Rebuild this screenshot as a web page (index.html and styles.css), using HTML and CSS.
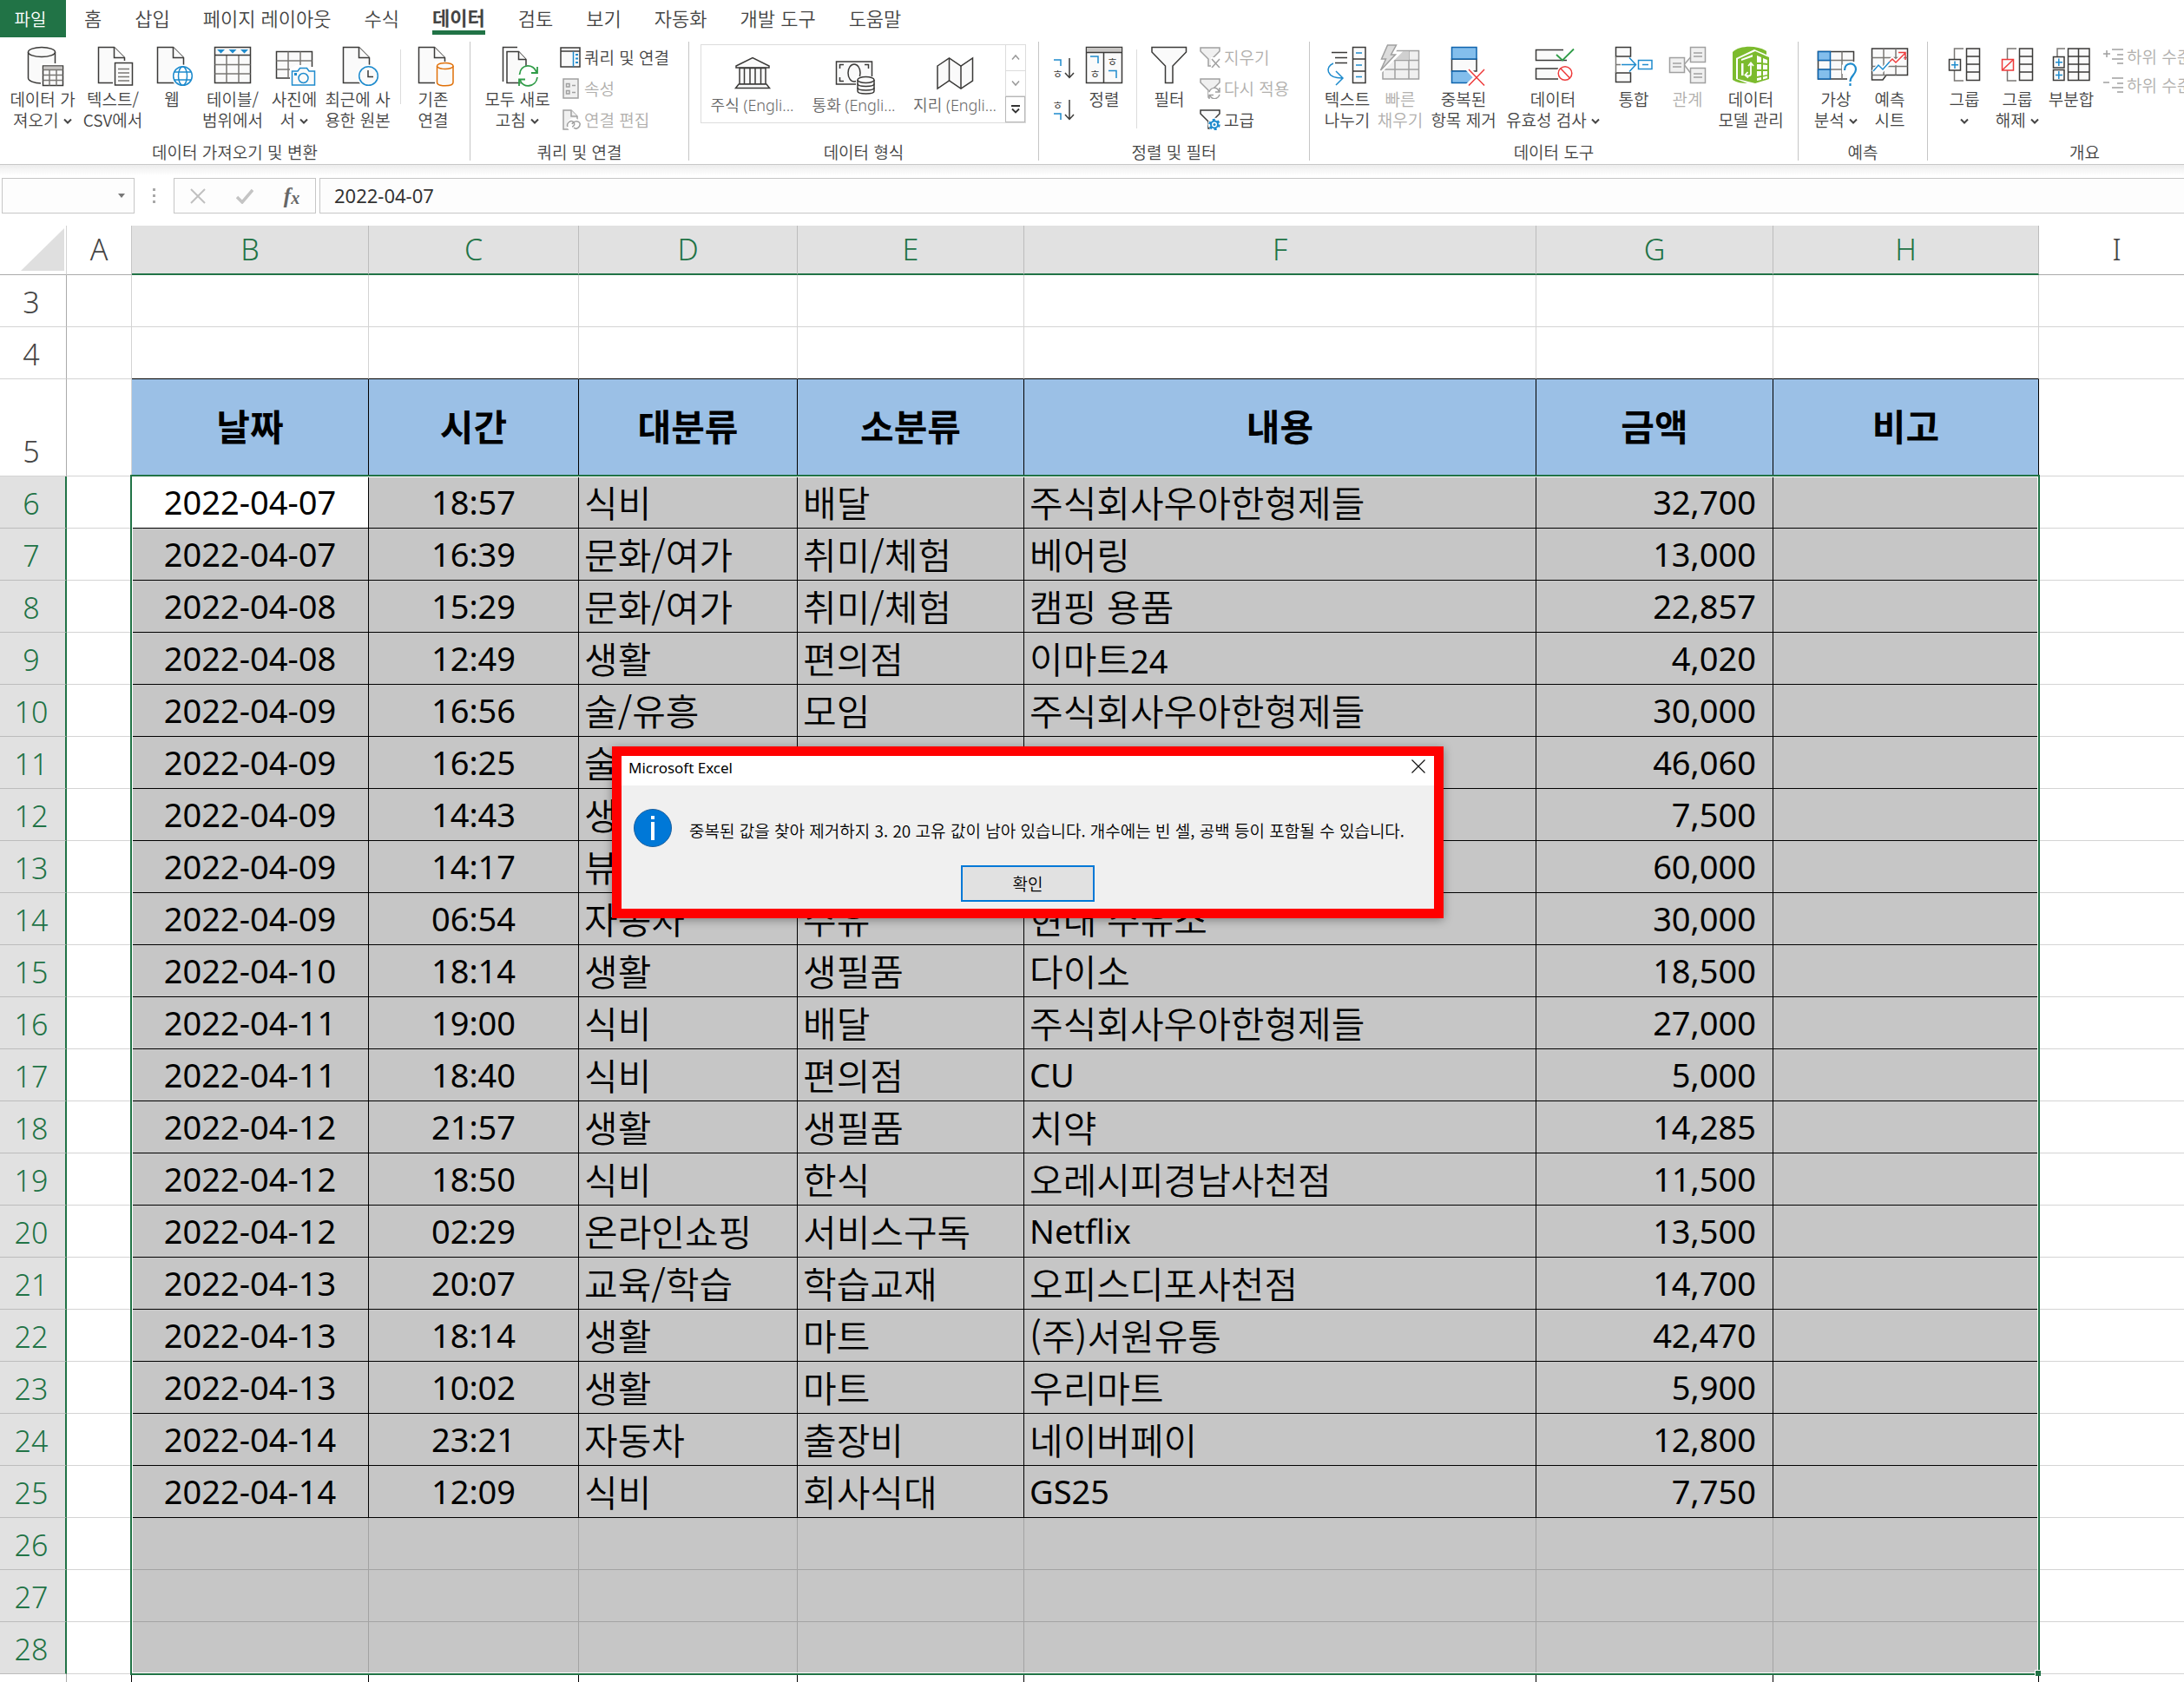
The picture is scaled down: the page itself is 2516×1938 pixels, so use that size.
FILE: index.html
```html
<!DOCTYPE html>
<html lang="ko">
<head>
<meta charset="utf-8">
<title>Microsoft Excel</title>
<link rel="stylesheet" href="styles.css">
</head>
<body>
<svg class="sprite" aria-hidden="true">
  <symbol id="doc" viewBox="0 0 48 48"><path class="k" d="M7.500 3.500H25.500L37.500 15.500V44.500H7.500Z"/><path class="k" d="M25.500 3.500V15.500H37.500"/></symbol>
  <symbol id="chev" viewBox="0 0 10 8"><path d="M1 1.500L5 5.500L9 1.500" fill="none" stroke="#444" stroke-width="2"/></symbol>
  <symbol id="funnel" viewBox="0 0 24 24"><path d="M1 1H23V5L14 14V22H10V14L1 5Z" stroke-width="1.500"/></symbol>
</svg>

<nav class="tabs" aria-label="리본 탭">
  <button class="tab-file">파일</button>
  <button class="tab">홈</button>
  <button class="tab">삽입</button>
  <button class="tab">페이지 레이아웃</button>
  <button class="tab">수식</button>
  <button class="tab tab-active">데이터</button>
  <button class="tab">검토</button>
  <button class="tab">보기</button>
  <button class="tab">자동화</button>
  <button class="tab">개발 도구</button>
  <button class="tab">도움말</button>
</nav>

<section class="ribbon" aria-label="데이터">
  <div class="group group-get">
    <div class="tools">
      <button class="tool"><svg class="icon" viewBox="0 0 48 48"><path class="k" d="M7.500 9V39C7.500 42 14 45 22.500 45H24V24H38.500V9"/><ellipse class="k" cx="23" cy="9" rx="15.500" ry="5.500"/><path fill="#fff" d="M22 22H48V48H22Z"/><path class="k" d="M24.500 25H47.500V47.500H24.500Z"/><path fill="#c8c6c4" d="M25 25.500H47V29H25Z"/><path class="g" d="M24.500 29.500H47.500M24.500 35.500H47.500M24.500 41.500H47.500M32 29.500V47.500M40 29.500V47.500"/></svg><span>데이터 가<br>져오기 <svg class="chev"><use href="#chev"/></svg></span></button>
      <button class="tool"><svg class="icon" viewBox="0 0 48 48"><use href="#doc"/><path fill="#fff" d="M24 19H48V48H24Z"/><path class="k" d="M26.500 21.500H46.500V47H26.500Z"/><path class="g" d="M30 28.500H43M30 33H43M30 37.500H43M30 42H43"/></svg><span>텍스트/<br>CSV에서</span></button>
      <button class="tool"><svg class="icon" viewBox="0 0 48 48"><use href="#doc"/><circle cx="36.500" cy="36.500" r="13" fill="#fff"/><circle class="b" cx="36.500" cy="36.500" r="10.800"/><ellipse class="b" cx="36.500" cy="36.500" rx="5" ry="10.800"/><path class="b" d="M27 32H46M27 41H46"/></svg><span>웹</span></button>
      <button class="tool"><svg class="icon" viewBox="0 0 48 48"><path class="k" d="M3.500 3.500H44.500V44.500H3.500Z"/><path class="g" d="M3.500 23.500H44.500M3.500 34H44.500M17 12.500V44.500M31 12.500V44.500"/><path class="k" d="M3.500 12.500H44.500"/><path fill="#1e8bcd" d="M6 6H15L10.500 10.500ZM19.500 6H28.500L24 10.500ZM33 6H42L37.500 10.500Z"/></svg><span>테이블/<br>범위에서</span></button>
      <button class="tool"><svg class="icon" viewBox="0 0 48 48"><path class="k" d="M3.500 8.500H44.500V39H3.500Z"/><path class="g" d="M3.500 19H44.500M3.500 29H44.500M17 8.500V39M31 8.500V39"/><path fill="#fff" d="M19 28L26 24H40L42 26H48V48H19Z"/><path class="b f" d="M21.500 31H28L30.500 27.500H38.500L41 31H47.500V47H21.500Z"/><circle class="b" cx="34.500" cy="39" r="5.500"/><path fill="#1e8bcd" d="M24 33H27V36H24Z"/></svg><span>사진에<br>서 <svg class="chev"><use href="#chev"/></svg></span></button>
      <button class="tool"><svg class="icon" viewBox="0 0 48 48"><use href="#doc"/><circle cx="36.500" cy="36.500" r="13" fill="#fff"/><circle class="b f" cx="36.500" cy="36.500" r="10.800"/><path class="k n" d="M36 30V37.500H42"/></svg><span>최근에 사<br>용한 원본</span></button>
      <i class="rule rule-short"></i>
      <button class="tool"><svg class="icon" viewBox="0 0 48 48"><use href="#doc"/><path fill="#fff" d="M26 20H48V48H26Z"/><path class="o" d="M28.500 25V44C28.500 49 47 49 47 44V25"/><ellipse class="o" cx="37.800" cy="25" rx="9.300" ry="3.500"/></svg><span>기존<br>연결</span></button>
    </div>
    <h2>데이터 가져오기 및 변환</h2>
  </div>

  <div class="group group-query">
    <div class="tools">
      <button class="tool"><svg class="icon" viewBox="0 0 48 48"><path class="k n" d="M7.500 43V3.500H24"/><path class="k" d="M12 8.500H25.500L34 17.500V44.500H12Z"/><path class="k" d="M25.500 8.500V17.500H34"/><circle cx="36.500" cy="36.500" r="12" fill="#fff"/><path class="e" d="M26.500 35C27.500 22 43 22 46 32M47 26V33H40M47 38C45.500 50 30 51 27 41M26 48V40.500H33"/></svg><span>모두 새로<br>고침 <svg class="chev"><use href="#chev"/></svg></span></button>
      <div class="stack">
        <button class="mini"><svg class="mini-icon" viewBox="0 0 24 24"><path class="k" d="M1 1H23V23H1Z"/><path class="k" d="M1 5H23"/><path class="b" d="M15.500 5.500V22.500"/><path fill="#1e8bcd" d="M18 8H21V10H18ZM18 12.500H21V14.500H18ZM18 17H21V19H18Z"/></svg>쿼리 및 연결</button>
        <button class="mini" disabled><svg class="mini-icon" viewBox="0 0 24 24"><path class="d" d="M4 1H21V23H4Z"/><path class="d" d="M7.500 6.500H11V10H7.500ZM7.500 14.500H11V18H7.500ZM14 8.500H18M14 16.500H18"/></svg>속성</button>
        <button class="mini" disabled><svg class="mini-icon" viewBox="0 0 24 24"><path class="d" d="M4 1H13L20 8V23H4Z"/><path class="d" d="M13 1V8H20"/><circle cx="16" cy="18" r="8" fill="#fff"/><path class="d n" d="M9 20C7 16 13 11 16 15C18 18 15 20 14 20M14 17C15 14 21 12 23 16C24 20 19 24 16 21"/></svg>연결 편집</button>
      </div>
    </div>
    <h2>쿼리 및 연결</h2>
  </div>

  <div class="group group-types">
    <div class="tools">
      <div class="gallery">
        <button class="type"><svg class="icon" viewBox="0 0 48 48"><path class="k" d="M5 14L24 4.500L43 14V16H5Z"/><path class="k" d="M9 16.500H39V35H9Z"/><path class="k" d="M14.500 16.500V35M21 16.500V35M27 16.500V35M33.500 16.500V35"/><path class="k" d="M8 35H40L43.500 39.500H4.500Z"/></svg><span>주식 (Engli...</span></button>
        <button class="type"><svg class="icon" viewBox="0 0 48 48"><path class="k" d="M3.500 9H44.500V35H3.500Z"/><ellipse class="k" cx="24" cy="22" rx="7" ry="10"/><path class="k n" d="M12 12.500H7.500V17M7.500 27V31.500H12M36 12.500H40.500V17"/><path fill="#fff" d="M26 26H48V48H26Z"/><path class="k" d="M28 30V43C28 47 47 47 47 43V30"/><ellipse class="k" cx="37.500" cy="30" rx="9.500" ry="3.500"/><path class="k n" d="M28 34.500C28 38.500 47 38.500 47 34.500M28 39C28 43 47 43 47 39"/></svg><span>통화 (Engli...</span></button>
        <button class="type"><svg class="icon" viewBox="0 0 48 48"><path class="k" d="M4 14L17.500 5L31 14L44.500 5V31L31 40L17.500 31L4 40Z"/><path class="k" d="M17.500 5V31M31 14V40"/></svg><span>지리 (Engli...</span></button>
        <div class="scroller">
          <button aria-label="위로"><svg width="10" height="8" viewBox="0 0 10 8"><path d="M1 6.500L5 2L9 6.500" fill="none" stroke="#999" stroke-width="1.500"/></svg></button>
          <button aria-label="아래로"><svg width="10" height="8" viewBox="0 0 10 8"><path d="M1 1.500L5 6L9 1.500" fill="none" stroke="#999" stroke-width="1.500"/></svg></button>
          <button class="more" aria-label="자세히"><svg width="12" height="12" viewBox="0 0 12 12"><path d="M1 2H11M2 5.500L6 9.500L10 5.500" fill="none" stroke="#333" stroke-width="1.800"/></svg></button>
        </div>
      </div>
    </div>
    <h2>데이터 형식</h2>
  </div>

  <div class="group group-sort">
    <div class="tools">
      <div class="sorts">
        <button aria-label="오름차순 정렬"><svg width="26" height="28" viewBox="0 0 26 28"><path class="b" d="M2 5H10V12"/><text class="jamo" x="0" y="26">ㅎ</text><path class="k n" d="M20 3V25M15 20L20 25.500L25 20"/></svg></button>
        <button aria-label="내림차순 정렬"><svg width="26" height="28" viewBox="0 0 26 28"><text class="jamo" x="0" y="14">ㅎ</text><path class="b" d="M2 19H10V26"/><path class="k n" d="M20 3V25M15 20L20 25.500L25 20"/></svg></button>
      </div>
      <button class="tool"><svg class="icon" viewBox="0 0 48 48"><path class="k" d="M3.500 3.500H44.500V44.500H3.500Z"/><path fill="#c8c6c4" d="M4 4H44V9H4Z"/><path class="k" d="M3.500 9.500H44.500M23.500 9.500V44.500"/><path class="b" d="M8 14H17V22M29 30.500H38V39"/><text class="jamo" x="7" y="39">ㅎ</text><text class="jamo" x="27" y="25">ㅎ</text></svg><span>정렬</span></button>
      <i class="rule"></i>
      <button class="tool"><svg class="icon" viewBox="0 0 48 48"><path class="k" d="M4 3.500H43.500V9L28 25V44.500H19.500V25L4 9Z"/></svg><span>필터</span></button>
      <div class="stack">
        <button class="mini" disabled><svg class="mini-icon" viewBox="0 0 24 24"><use href="#funnel" fill="#f0f0f0" stroke="#a0a0a0"/><path d="M13 12H24V24H13Z" fill="#fff"/><path class="d n" d="M14 14L23 24M23 14L14 24"/></svg>지우기</button>
        <button class="mini" disabled><svg class="mini-icon" viewBox="0 0 24 24"><use href="#funnel" fill="#f0f0f0" stroke="#a0a0a0"/><circle cx="17" cy="18" r="7" fill="#fff"/><path class="d n" d="M11 16C13 10 20 10 22 15M23 11V16H18M23 19C21 25 14 25 12 20M11 24V19.500H16"/></svg>다시 적용</button>
        <button class="mini"><svg class="mini-icon" viewBox="0 0 24 24"><use href="#funnel" fill="#fafafa" stroke="#3b3a38"/><circle cx="17" cy="17" r="7.500" fill="#fff"/><circle cx="17" cy="17.500" r="4" fill="#fff" stroke="#1e8bcd" stroke-width="2"/><circle cx="17" cy="17.500" r="5.500" fill="none" stroke="#1e8bcd" stroke-width="2.500" stroke-dasharray="3 2.760"/><circle cx="17" cy="17.500" r="1.500" fill="#1e8bcd"/></svg>고급</button>
      </div>
    </div>
    <h2>정렬 및 필터</h2>
  </div>

  <div class="group group-data">
    <div class="tools">
      <button class="tool"><svg class="icon" viewBox="0 0 48 48"><path class="k" d="M6 9.500H24M10 15.500H24M10 21.500H24M30.500 3.500H45V44.500H30.500ZM30.500 17H45M30.500 31H45"/><path class="b" d="M34 10H41M34 24H41M34 37.500H41M8 22C-2 26 0 39 18 39M11 31L19 39L11 47"/></svg><span>텍스트<br>나누기</span></button>
      <button class="tool" disabled><svg class="icon" viewBox="0 0 48 48"><path class="d" d="M4 7.500H45.500V40H4Z"/><path class="d" d="M4 18.500H45.500M4 29H45.500M18 7.500V40M34 7.500V40"/><path fill="#d0d0d0" d="M18 8H34V18H18Z"/><path d="M9 0H21L15 11H21L1 31L7 16H1Z" fill="#e0e0e0" stroke="#fff" stroke-width="5"/><path d="M9.500 1H19.500L13.500 12H18.500L1.500 30L7.500 17H2.500Z" fill="#dcdcdc" stroke="#a0a0a0" stroke-width="1.500"/></svg><span>빠른<br>채우기</span></button>
      <button class="tool"><svg class="icon" viewBox="0 0 48 48"><path class="k" d="M10.500 17H39V31H10.500Z"/><path d="M10.500 3.500H39V17H10.500ZM10.500 31H33L37 36L30 44.500H10.500Z" fill="#83beec" stroke="#0f64ad" stroke-width="1.500"/><path d="M29 28L48 48M48 28L29 48" stroke="#fff" stroke-width="6"/><path class="r" d="M30 29L48 47.500M48 29L30 47.500"/></svg><span>중복된<br>항목 제거</span></button>
      <button class="tool"><svg class="icon" viewBox="0 0 48 48"><path class="k" d="M36 6.500H4.500V18.500H40M30 28H4.500V40H30"/><path class="e" d="M28 12L35 18.500L48 5.500"/><circle cx="38" cy="33.500" r="10" fill="#fff"/><circle class="r" cx="38" cy="33.500" r="7.800"/><path class="r" d="M33 28L43.500 39"/></svg><span>데이터<br>유효성 검사 <svg class="chev"><use href="#chev"/></svg></span></button>
      <button class="tool"><svg class="icon" viewBox="0 0 48 48"><path class="k" d="M3.500 3.500H20.500V14H3.500ZM3.500 33H20.500V43.500H3.500Z"/><path class="g" d="M3.500 14V33M3.500 23.500H9"/><path class="b" d="M10 23.500H26M19 15.500L26.500 23.500L19 31.500M29.500 18.500H45V28.500H29.500ZM34 23.500H41"/></svg><span>통합</span></button>
      <button class="tool" disabled><svg class="icon" viewBox="0 0 48 48"><path class="d" d="M3.500 15.500H20.500V32.500H3.500ZM27.500 3.500H44.500V20.500H27.500ZM27.500 27.500H44.500V44.500H27.500Z"/><path class="d n" d="M20.500 23L27.500 15M20.500 24L27.500 33M7 22H17M7 26H17M31 10H41M31 14H41M31 34H41M31 38H41"/></svg><span>관계</span></button>
      <button class="tool"><svg class="icon" viewBox="0 0 48 48"><path fill="#7cbb2e" d="M3 9C11 1 32 1 42 8V12L28 6L7 16V40L20 45C13 45 8 44 3 41Z"/><path fill="#7cbb2e" d="M29 8L45 15V40L29 45L9 40V17Z"/><path fill="#fff" d="M13 17L26 12V14.500L13 19ZM31 13L36 15V21H31ZM38 16L43 18V22L38 21.500ZM31 23H36V29H31ZM38 23.500L43 24V29H38ZM31 31H36V36L31 37ZM38 31H43V35L38 36ZM31 39L36 38V41L31 42ZM38 37.500L43 36.500V39L38 40.500ZM13 22H15.500V36H13Z"/><path fill="none" stroke="#fff" stroke-width="1.800" d="M24 22V34C24 37 20 37 18 35.500M21 25L24 21.500L27 25M20.500 32L17.500 35.500L21 38.500"/></svg><span>데이터<br>모델 관리</span></button>
    </div>
    <h2>데이터 도구</h2>
  </div>

  <div class="group group-forecast">
    <div class="tools">
      <button class="tool"><svg class="icon" viewBox="0 0 48 48"><path class="k" d="M3.500 8.500H44.500V40H3.500Z"/><path class="g" d="M3.500 18.500H44.500M3.500 29H44.500M31 8.500V40"/><path d="M3.500 8.500H17.500V18.500H3.500ZM3.500 29H17.500V40H3.500ZM17.500 18.500V29" fill="#83beec" stroke="#0f64ad" stroke-width="1.500"/><path fill="#fff" d="M31 24L36 20H48V48H37V34H31Z"/><path fill="none" stroke="#1e8bcd" stroke-width="2.200" d="M34 30C34 20 47 20 47 29C47 35 40.500 36 40.500 43M40.500 45V48"/></svg><span>가상<br>분석 <svg class="chev"><use href="#chev"/></svg></span></button>
      <button class="tool"><svg class="icon" viewBox="0 0 48 48"><path class="k" d="M3.500 5H44.500V35.500H20L16 41H3.500Z"/><path class="g" d="M3.500 15.500H44.500M3.500 25.500H44.500M17 5V35.500M31 5V35.500M3.500 35.500H20"/><path stroke="#fff" stroke-width="5" fill="none" d="M5 32L12 24L16 29L27 17L31 21L42 10"/><path class="b" d="M5 31L11 24L16 29L24 20"/><path class="r" d="M24 20L27 17L31 21L42 10M34 9.500H42V18"/></svg><span>예측<br>시트</span></button>
    </div>
    <h2>예측</h2>
  </div>

  <div class="group group-outline">
    <div class="tools">
      <button class="tool"><svg class="icon" viewBox="0 0 48 48"><path class="g" d="M23 5H12.500V42H23"/><path class="k" d="M26.500 5H41.500V41.500H26.500ZM26.500 14H41.500M26.500 23H41.500M26.500 32H41.500M6.500 17.500H19.500V30H6.500Z"/><path class="b" d="M13 19.500V28M9 23.800H17"/></svg><span>그룹<br><svg class="chev"><use href="#chev"/></svg></span></button>
      <button class="tool"><svg class="icon" viewBox="0 0 48 48"><path class="g" d="M23 5H12.500V42H23"/><path class="k" d="M26.500 5H41.500V41.500H26.500ZM26.500 14H41.500M26.500 23H41.500M26.500 32H41.500"/><path class="r f" d="M6.500 17.500H19.500V30H6.500Z"/><path class="r" d="M7 29.500L19 18"/></svg><span>그룹<br>해제 <svg class="chev"><use href="#chev"/></svg></span></button>
      <button class="tool"><svg class="icon" viewBox="0 0 48 48"><path class="g" d="M17 5H8V14"/><path class="k" d="M20.500 5H45V41.500H20.500ZM20.500 14H45M20.500 23H45M20.500 32H45M32.500 5V41.500M3.500 14.500H16V27H3.500ZM3.500 29.500H16V41.500H3.500Z"/><path class="b" d="M9.800 16.500V25M6 20.800H14M9.800 31V40M6 35.500H14"/></svg><span>부분합</span></button>
      <div class="stack stack-tight">
        <button class="mini" disabled><svg class="mini-icon" viewBox="0 0 24 24"><path class="d n" d="M1 9H9M5 5V13M11 4H24M17 10H24M11 15H24M17 20H24"/></svg>하위 수준 표시</button>
        <button class="mini" disabled><svg class="mini-icon" viewBox="0 0 24 24"><path class="d n" d="M1 9H8M11 4H24M17 10H24M11 15H24M17 20H24"/></svg>하위 수준 숨기기</button>
      </div>
    </div>
    <h2>개요</h2>
  </div>
</section>

<section class="formula-bar" aria-label="수식 입력줄">
  <div class="name-box"><input type="text" aria-label="이름 상자"><button aria-label="이름 목록"><svg width="8" height="5" viewBox="0 0 8 5"><path d="M0 0H8L4 5Z" fill="#777"/></svg></button></div>
  <div class="dots"><i></i><i></i><i></i></div>
  <div class="fx-box">
    <button aria-label="취소"><svg width="20" height="18" viewBox="0 0 20 18"><path d="M2 1L18 17M18 1L2 17" stroke="#c0c0c0" stroke-width="2"/></svg></button>
    <button aria-label="입력"><svg width="20" height="18" viewBox="0 0 20 18"><path d="M1 10L7 16L19 2" fill="none" stroke="#c4c4c4" stroke-width="3.500"/></svg></button>
    <button class="fx" aria-label="함수 삽입">f<small>x</small></button>
  </div>
  <input class="formula" type="text" aria-label="수식" value="2022-04-07">
</section>

<main class="sheet">
  <table>
    <colgroup><col class="c-head"><col class="c-a"><col class="c-b"><col class="c-c"><col class="c-d"><col class="c-e"><col class="c-f"><col class="c-g"><col class="c-h"><col></colgroup>
    <thead>
      <tr><th class="corner"><svg width="50" height="50" viewBox="0 0 50 50"><path d="M50 0V49H0Z" fill="#dfdfdf"/></svg></th><th>A</th><th class="on">B</th><th class="on">C</th><th class="on">D</th><th class="on">E</th><th class="on">F</th><th class="on">G</th><th class="on">H</th><th class="last">I</th></tr>
    </thead>
    <tbody class="plain">
      <tr><th>3</th><td></td><td></td><td></td><td></td><td></td><td></td><td></td><td></td><td></td></tr>
      <tr class="above"><th>4</th><td></td><td></td><td></td><td></td><td></td><td></td><td></td><td></td><td></td></tr>
      <tr class="titles"><th>5</th><td></td><td>날짜</td><td>시간</td><td>대분류</td><td>소분류</td><td>내용</td><td>금액</td><td>비고</td><td></td></tr>
    </tbody>
    <tbody class="data">
      <tr><th>6</th><td></td><td class="active">2022-04-07</td><td>18:57</td><td>식비</td><td>배달</td><td>주식회사우아한형제들</td><td>32,700</td><td></td><td></td></tr>
      <tr><th>7</th><td></td><td>2022-04-07</td><td>16:39</td><td>문화/여가</td><td>취미/체험</td><td>베어링</td><td>13,000</td><td></td><td></td></tr>
      <tr><th>8</th><td></td><td>2022-04-08</td><td>15:29</td><td>문화/여가</td><td>취미/체험</td><td>캠핑 용품</td><td>22,857</td><td></td><td></td></tr>
      <tr><th>9</th><td></td><td>2022-04-08</td><td>12:49</td><td>생활</td><td>편의점</td><td>이마트<span class="latin">24</span></td><td>4,020</td><td></td><td></td></tr>
      <tr><th>10</th><td></td><td>2022-04-09</td><td>16:56</td><td>술/유흥</td><td>모임</td><td>주식회사우아한형제들</td><td>30,000</td><td></td><td></td></tr>
      <tr><th>11</th><td></td><td>2022-04-09</td><td>16:25</td><td>술</td><td></td><td></td><td>46,060</td><td></td><td></td></tr>
      <tr><th>12</th><td></td><td>2022-04-09</td><td>14:43</td><td>생</td><td></td><td></td><td>7,500</td><td></td><td></td></tr>
      <tr><th>13</th><td></td><td>2022-04-09</td><td>14:17</td><td>뷰</td><td></td><td></td><td>60,000</td><td></td><td></td></tr>
      <tr><th>14</th><td></td><td>2022-04-09</td><td>06:54</td><td>자동차</td><td>주유</td><td>현대 주유소</td><td>30,000</td><td></td><td></td></tr>
      <tr><th>15</th><td></td><td>2022-04-10</td><td>18:14</td><td>생활</td><td>생필품</td><td>다이소</td><td>18,500</td><td></td><td></td></tr>
      <tr><th>16</th><td></td><td>2022-04-11</td><td>19:00</td><td>식비</td><td>배달</td><td>주식회사우아한형제들</td><td>27,000</td><td></td><td></td></tr>
      <tr><th>17</th><td></td><td>2022-04-11</td><td>18:40</td><td>식비</td><td>편의점</td><td class="latin">CU</td><td>5,000</td><td></td><td></td></tr>
      <tr><th>18</th><td></td><td>2022-04-12</td><td>21:57</td><td>생활</td><td>생필품</td><td>치약</td><td>14,285</td><td></td><td></td></tr>
      <tr><th>19</th><td></td><td>2022-04-12</td><td>18:50</td><td>식비</td><td>한식</td><td>오레시피경남사천점</td><td>11,500</td><td></td><td></td></tr>
      <tr><th>20</th><td></td><td>2022-04-12</td><td>02:29</td><td>온라인쇼핑</td><td>서비스구독</td><td class="latin">Netflix</td><td>13,500</td><td></td><td></td></tr>
      <tr><th>21</th><td></td><td>2022-04-13</td><td>20:07</td><td>교육/학습</td><td>학습교재</td><td>오피스디포사천점</td><td>14,700</td><td></td><td></td></tr>
      <tr><th>22</th><td></td><td>2022-04-13</td><td>18:14</td><td>생활</td><td>마트</td><td>(주)서원유통</td><td>42,470</td><td></td><td></td></tr>
      <tr><th>23</th><td></td><td>2022-04-13</td><td>10:02</td><td>생활</td><td>마트</td><td>우리마트</td><td>5,900</td><td></td><td></td></tr>
      <tr><th>24</th><td></td><td>2022-04-14</td><td>23:21</td><td>자동차</td><td>출장비</td><td>네이버페이</td><td>12,800</td><td></td><td></td></tr>
      <tr><th>25</th><td></td><td>2022-04-14</td><td>12:09</td><td>식비</td><td>회사식대</td><td class="latin">GS25</td><td>7,750</td><td></td><td></td></tr>
    </tbody>
    <tbody class="blank">
      <tr><th>26</th><td></td><td></td><td></td><td></td><td></td><td></td><td></td><td></td><td></td></tr>
      <tr><th>27</th><td></td><td></td><td></td><td></td><td></td><td></td><td></td><td></td><td></td></tr>
      <tr><th>28</th><td></td><td></td><td></td><td></td><td></td><td></td><td></td><td></td><td></td></tr>
    </tbody>
    <tbody class="next">
      <tr><th></th><td></td><td></td><td></td><td></td><td></td><td></td><td></td><td></td><td></td></tr>
    </tbody>
  </table>
  <div class="selection"><i></i></div>
</main>

<div class="dialog" role="dialog" aria-labelledby="dlg-title">
  <header><span id="dlg-title">Microsoft Excel</span><button aria-label="닫기"><svg width="16" height="16" viewBox="0 0 16 16"><path d="M0.500 0.500L15.500 15.500M15.500 0.500L0.500 15.500" stroke="#111" stroke-width="1.200"/></svg></button></header>
  <div class="message"><svg width="44" height="44" viewBox="0 0 44 44"><circle cx="22" cy="22" r="21.500" fill="#0078d7" stroke="#1a5f9e"/><path d="M20 8H24V12H20ZM20 15H24V36H20Z" fill="#fff"/></svg><p>중복된 값을 찾아 제거하지 3. 20 고유 값이 남아 있습니다. 개수에는 빈 셀, 공백 등이 포함될 수 있습니다.</p></div>
  <footer><button>확인</button></footer>
</div>
</body>
</html>
```
FILE: styles.css
```css
* { box-sizing: border-box; }

html, body { height: 100%; }

body {
  margin: 0;
  position: relative;
  overflow: hidden;
  background: #fff;
  color: #444;
  font-family: "Noto Sans CJK KR", sans-serif;
  font-size: 19px;
  font-weight: 350;
}

button, input {
  margin: 0;
  padding: 0;
  border: 0;
  background: none;
  color: inherit;
  font: inherit;
}

h2, p { margin: 0; font-weight: inherit; }

.sprite { position: absolute; width: 0; height: 0; }

/* Icon strokes */
.k { fill: #fafafa; stroke: #3b3a38; stroke-width: 1.5; }
.g { fill: none; stroke: #797774; stroke-width: 1.5; }
.b { fill: none; stroke: #1e8bcd; stroke-width: 1.5; }
.o { fill: #fafafa; stroke: #e07008; stroke-width: 1.5; }
.e { fill: none; stroke: #309c48; stroke-width: 1.8; }
.r { fill: none; stroke: #ee3b3b; stroke-width: 1.5; }
.d { fill: #f0f0f0; stroke: #a0a0a0; stroke-width: 1.5; }
.f { fill: #fafafa; }
.n { fill: none; }
.jamo { fill: #3b3a38; font-size: 14px; }

/* Tabs */
.tabs {
  display: flex;
  gap: 38px;
  height: 43px;
  font-size: 22px;
  line-height: 38px;
  white-space: nowrap;
}
.tab-file {
  width: 76px;
  margin-right: -17px;
  padding-right: 6px;
  background: #217346;
  color: #fff;
  font-size: 20px;
}
.tab { height: 40px; }
.tab-active { border-bottom: 5px solid #217346; font-weight: 700; }

/* Ribbon */
.ribbon {
  display: flex;
  padding: 5px 0 4px;
  border-bottom: 1px solid #c8c8c8;
}
.group {
  flex: none;
  border-right: 1px solid #c6c6c6;
}
.tools { display: grid; height: 117px; }
.group h2 { font-size: 19px; line-height: 20px; text-align: center; white-space: nowrap; }

.group-get { width: 542px; }
.group-get .tools { padding-left: 8px; grid-template-columns: 82px 80px 56px 84px 58px 88px 10px 66px; }
.group-query { width: 252px; }
.group-query .tools { padding-left: 18px; grid-template-columns: 72px auto; column-gap: 10px; }
.group-types { width: 403px; }
.group-types .tools { padding: 3px 15px 23px 13px; }
.group-sort { width: 312px; }
.group-sort .tools { padding-left: 12px; grid-template-columns: 32px 62px 12px 64px auto; }
.group-data { width: 563px; }
.group-data .tools { padding-left: 12px; grid-template-columns: 62px 60px 86px 120px 66px 58px 88px; }
.group-forecast { width: 149px; }
.group-forecast .tools { padding-left: 11px; grid-template-columns: 64px 60px; }
.group-outline { width: 362px; }
.group-outline .tools { padding-left: 12px; grid-template-columns: 60px 62px 62px auto; }

.tool {
  display: flex;
  flex-direction: column;
  align-items: center;
  padding-top: 3px;
  line-height: 24px;
  white-space: nowrap;
}
.tool span { padding-top: 3px; }
.tool:disabled, .mini:disabled { color: #b1afad; }
.icon { display: block; flex: none; width: 48px; height: 48px; overflow: visible; }
.chev { width: 10px; height: 8px; vertical-align: 2px; }

.rule { width: 1px; height: 91px; margin: 9px auto 0; background: #dcdcdc; }
.rule-short { height: 63px; }

.stack { display: grid; grid-template-rows: repeat(3, 36px); justify-items: start; padding-left: 3px; }
.stack-tight { grid-template-rows: repeat(2, 33px); padding-left: 5px; }
.mini { display: flex; align-items: center; gap: 4px; line-height: 28px; white-space: nowrap; }
.mini-icon { width: 24px; height: 24px; }

.gallery {
  display: grid;
  grid-template-columns: 117px 117px 116px 23px;
  border: 1px solid #dcdcdc;
}
.type {
  display: flex;
  flex-direction: column;
  align-items: center;
  padding-top: 10px;
  color: #666;
  font-family: "Noto Sans", "Noto Sans CJK KR", sans-serif;
  font-size: 18px;
  line-height: 22px;
  white-space: nowrap;
}
.scroller { display: grid; grid-template-rows: 1fr 1fr 1fr; }
.scroller button { display: grid; place-items: center; border-left: 1px solid #dcdcdc; border-bottom: 1px solid #dcdcdc; }
.scroller .more { border: 1px solid #b8b8b8; }

.sorts { display: grid; grid-template-rows: 48px 48px; padding-top: 6px; }
.sorts button { display: grid; place-items: center; }
.sorts svg { overflow: visible; }

/* Formula bar */
.formula-bar {
  display: flex;
  padding: 15px 0 14px;
  background: linear-gradient(#ececec, #fff 12px);
}
.name-box, .fx-box, .formula {
  height: 41px;
  border: 1px solid #c6c6c6;
  background: #fdfdfd;
}
.name-box { display: flex; width: 153px; margin-left: 2px; }
.name-box input { flex: 1; min-width: 0; }
.name-box button { width: 28px; }
.name-box svg { display: block; margin: auto; }
.dots { display: grid; align-content: center; justify-content: center; gap: 4px; width: 45px; }
.dots i { width: 3px; height: 3px; background: #a8a8a8; }
.fx-box { display: flex; width: 164px; margin-right: 4px; }
.fx-box button { display: flex; flex: 1; align-items: center; justify-content: center; }
.fx-box .fx { color: #666; font: italic 700 25px "Liberation Serif", serif; }
.fx small { font-size: 20px; padding-top: 5px; }
.formula {
  flex: 1;
  padding: 0 0 2px 16px;
  border-right: 0;
  color: #333;
  font-family: "Noto Sans", sans-serif;
  font-size: 22px;
  font-weight: 400;
}

/* Sheet */
.sheet { position: relative; }
table { width: calc(100% + 12px); table-layout: fixed; border-collapse: separate; border-spacing: 0; }
.c-head { width: 77px; }
.c-a { width: 75px; }
.c-b { width: 273px; }
.c-c { width: 242px; }
.c-d { width: 252px; }
.c-e { width: 261px; }
.c-f { width: 590px; }
.c-g { width: 273px; }
.c-h { width: 306px; }

th, td { padding: 0; white-space: nowrap; border: 0 solid #d4d4d4; border-width: 0 1px 1px 0; }
th { font: 350 34px/50px "Noto Sans", sans-serif; color: #444; }

thead th { height: 57px; border-bottom-color: #ababab; padding-bottom: 3px; }
thead th:nth-child(2) { border-right-color: #c6c6c6; }
thead .on { background: #e1e1e1; color: #217346; border-right-color: #bcbcbc; border-bottom: 2px solid #217346; padding-bottom: 2px; }
thead .last { border-right: 0; }
.corner svg { display: block; margin: 3px 2px 0 auto; }

tbody tr { height: 60px; }
tbody th { vertical-align: bottom; padding: 0 4px 3px 0; border-right-color: #ababab; }
tbody td:last-child { border-right: 0; }

.above td:nth-child(n+3):nth-child(-n+9) { border-bottom-color: #000; }
.titles { height: 112px; }
.titles td { padding-bottom: 5px; font-size: 42px; font-weight: 700; line-height: 60px; text-align: center; color: #000; }
.titles td:nth-child(n+3):nth-child(-n+9) { background: #9bc0e6; border-right-color: #000; }

.data th, .blank th { background: #e1e1e1; color: #217346; border-right: 2px solid #217346; border-bottom-color: #bcbcbc; padding-right: 3px; }
.data td { color: #000; font-size: 42px; line-height: 52px; }
.data td:nth-child(n+3):nth-child(-n+9) { background: #c6c6c6; border-color: #000; padding-bottom: 2px; }
.data td.active:nth-child(3) { background: #fff; }
.data td:nth-child(3), .data td:nth-child(4), .data td:nth-child(8), .data .latin { font-family: "Noto Sans", sans-serif; font-size: 38px; font-weight: 400; }
.data span.latin { line-height: 40px; }
.data td:nth-child(3), .data td:nth-child(4) { text-align: center; }
.data td:nth-child(5), .data td:nth-child(6), .data td:nth-child(7) { padding-left: 6px; padding-bottom: 4px; }
.data td:nth-child(8) { text-align: right; padding-right: 19px; }

.blank td:nth-child(n+3):nth-child(-n+9) { background: #c6c6c6; border-color: #a3a3a3; }
.next td:nth-child(n+2):nth-child(-n+9) { border-right-color: #000; }

.selection {
  position: absolute;
  left: 150px;
  top: 287px;
  width: 2200px;
  height: 1383px;
  border: 2px solid #217346;
  box-shadow: inset 0 0 0 1px #fff;
  pointer-events: none;
}
.selection i {
  position: absolute;
  right: -3px;
  bottom: -3px;
  width: 7px;
  height: 7px;
  background: #217346;
  border: 1px solid #fff;
  border-width: 1px 0 0 1px;
}

/* Message box */
.dialog {
  position: absolute;
  left: 705px;
  top: 860px;
  width: 958px;
  border: 11px solid #f00;
  background: #f0f0f0;
  box-shadow: 0 2px 10px rgba(0, 0, 0, .35);
  color: #000;
  font-size: 19px;
}
.dialog header {
  display: flex;
  justify-content: space-between;
  height: 34px;
  padding: 0 10px 0 8px;
  background: #fff;
  font: 400 17px/28px "Noto Sans", sans-serif;
}
.dialog header button { height: 24px; }
.dialog header svg { display: block; }
.message { display: flex; align-items: center; gap: 20px; padding: 27px 0 0 14px; white-space: nowrap; }
.message svg { flex: none; }
.message p { padding-top: 4px; }
.dialog footer { padding: 21px 0 8px; text-align: center; }
.dialog footer button { width: 154px; height: 42px; border: 2px solid #0078d7; background: #e1e1e1; line-height: 30px; }
```
